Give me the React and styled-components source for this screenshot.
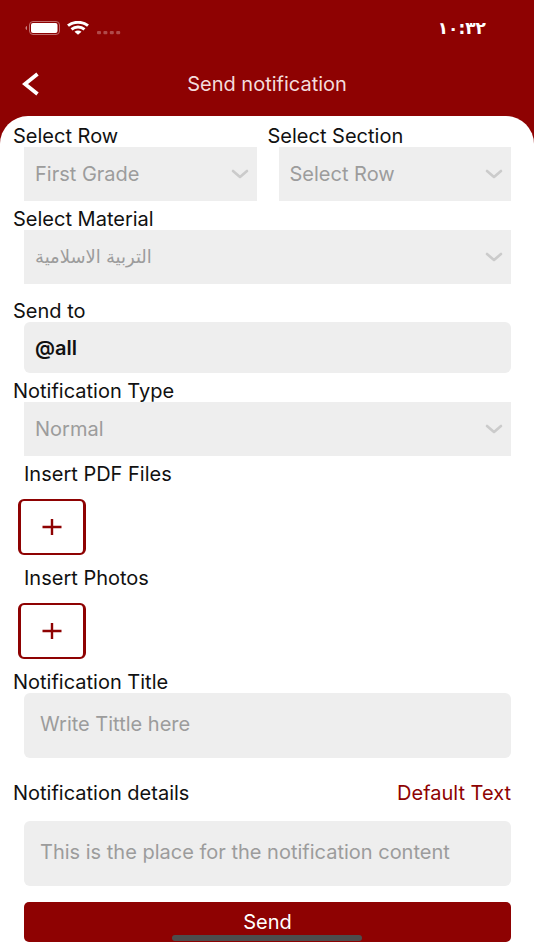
import React from 'react';
import styled, { createGlobalStyle } from 'styled-components';

const GlobalStyle = createGlobalStyle`
  * {
    box-sizing: border-box;
  }
  body {
    margin: 0;
    background-color: #ffffff;
    font-family: Inter, "DejaVu Sans", sans-serif;
    font-size: 20px;
    line-height: 22px;
    color: #111111;
  }
  button, input, select, textarea {
    font: inherit;
    margin: 0;
  }
`;

const Screen = styled.div`
  min-height: 100vh;
  background: linear-gradient(#8e0202 160px, #ffffff 160px);
`;

const StatusBar = styled.div`
  display: flex;
  align-items: center;
  justify-content: space-between;
  height: 56px;
  padding: 0 48px 0 24px;
`;

const StatusIcons = styled.div`
  display: flex;
  align-items: center;
`;

const Clock = styled.span`
  color: #ffffff;
  font-family: "DejaVu Sans", sans-serif;
  font-size: 17px;
  font-weight: bold;
`;

const Header = styled.header`
  display: grid;
  grid-template-columns: 48px 1fr 48px;
  align-items: center;
  height: 60px;
`;

const BackButton = styled.button`
  display: flex;
  align-items: center;
  justify-content: flex-end;
  height: 48px;
  padding: 0 8px 4px 0;
  border: none;
  background: none;
  cursor: pointer;
`;

const Title = styled.h1`
  margin: 0;
  padding-bottom: 4px;
  text-align: center;
  font-size: 20px;
  font-weight: 400;
  color: #f4dcdc;
`;

const Sheet = styled.form`
  padding: 9px 23px 8px 13px;
  border-radius: 28px 28px 0 0;
  background-color: #ffffff;
`;

const Columns = styled.div`
  display: grid;
  grid-template-columns: 1fr 1fr;
  gap: 11px;
`;

const Group = styled.div`
  margin-bottom: ${({ gap = '7px' }) => gap};
`;

const Label = styled.label`
  display: block;
  padding-left: ${({ $inset }) => $inset ? '11px' : '0'};
`;

const LabelRow = styled.div`
  display: flex;
  justify-content: space-between;
  margin-bottom: 17px;
`;

const DefaultText = styled.button`
  padding: 0;
  border: none;
  background: none;
  color: #8e0202;
  cursor: pointer;
`;

const SelectBox = styled.div`
  display: grid;
  align-items: center;
  margin-left: 11px;
  background-color: #eeeeee;
  > * {
    grid-area: 1 / 1;
  }
  svg {
    justify-self: end;
    margin-right: 8px;
    pointer-events: none;
  }
`;

const StyledSelect = styled.select`
  appearance: none;
  width: 100%;
  height: 54px;
  padding: 0 36px 0 11px;
  border: none;
  border-radius: 0;
  outline: none;
  background: none;
  color: #9c9c9c;
  font-size: ${({ $arabic }) => $arabic ? '18px' : '20px'};
`;

const Recipient = styled.input`
  display: block;
  width: calc(100% - 11px);
  height: 51px;
  margin-left: 11px;
  padding: 0 11px;
  border: none;
  border-radius: 6px;
  outline: none;
  background-color: #eeeeee;
  color: #111111;
  font-weight: 600;
`;

const TextBox = styled.textarea`
  display: block;
  width: calc(100% - 11px);
  height: 65px;
  margin-left: 11px;
  padding: 20px 16px;
  border: none;
  border-radius: 6px;
  outline: none;
  resize: none;
  overflow: hidden;
  background-color: #eeeeee;
  &::placeholder {
    color: #9c9c9c;
    opacity: 1;
  }
`;

const AddButton = styled.button`
  display: flex;
  align-items: center;
  justify-content: center;
  width: 68px;
  height: 56px;
  margin: 14px 0 12px 5px;
  border: solid #8e0202;
  border-width: 2px 3px;
  border-radius: 6px;
  background-color: #ffffff;
  cursor: pointer;
`;

const SendButton = styled.button`
  display: block;
  width: calc(100% - 11px);
  height: 40px;
  margin-left: 11px;
  padding: 0;
  border: none;
  border-radius: 5px;
  background-color: #8e0202;
  color: #ffffff;
  cursor: pointer;
`;

const HomeIndicator = styled.div`
  position: fixed;
  bottom: 9px;
  left: 50%;
  width: 190px;
  height: 6px;
  margin-left: -95px;
  border-radius: 3px;
  background-color: #4d4d4d;
`;

const Battery = () => (
  <svg width='37' height='16' viewBox='0 0 37 16'>
    <path d='M3 6c-2 .6-2 3.400 0 4z' fill='#c98080' />
    <rect x='5.500' y='1.500' width='30' height='13' rx='3.500' fill='none' stroke='#c06c6c' />
    <rect x='7' y='3' width='26.500' height='10' rx='2' fill='#ffffff' />
  </svg>
);

const Wifi = () => (
  <svg width='22' height='14' viewBox='0 0 22 14' style={{ marginLeft: '6px' }}>
    <g fill='none' stroke='#ffffff' strokeWidth='3'>
      <path d='M1 4.700C6.500.2 15.500.2 21 4.700' />
      <path d='M4.500 8.300c3.700-3 9.300-3 13 0' />
    </g>
    <path d='M7.500 10.700c2-1.600 5-1.600 7 0L11 13.800z' fill='#ffffff' />
  </svg>
);

const Signal = () => (
  <svg width='24' height='14' viewBox='0 0 24 14' style={{ marginLeft: '8px' }}>
    {[0, 6.400, 12.800, 19.200].map((x) => (
      <rect key={x} x={x} y='10' width='4' height='3.200' rx='1' fill='#b04a4a' />
    ))}
  </svg>
);

const Chevron = () => (
  <svg width='18' height='10' viewBox='0 0 18 10'>
    <path d='M2 2l7 6 7-6' fill='none' stroke='#cbcbcb' strokeWidth='2.600' strokeLinecap='round' strokeLinejoin='round' />
  </svg>
);

const Plus = () => (
  <svg width='20' height='16' viewBox='0 0 20 16'>
    <path d='M.5 8h19M10 0v16' fill='none' stroke='#8e0202' strokeWidth='2.400' />
  </svg>
);

const SelectField = ({ id, label, value, arabic, gap }) => (
  <Group gap={gap}>
    <Label htmlFor={id}>{label}</Label>
    <SelectBox>
      <StyledSelect id={id} $arabic={arabic}>
        <option>{value}</option>
      </StyledSelect>
      <Chevron />
    </SelectBox>
  </Group>
);

const Upload = ({ id, label }) => (
  <div>
    <Label $inset htmlFor={id}>{label}</Label>
    <AddButton id={id} type='button'>
      <Plus />
    </AddButton>
  </div>
);

const App = () => (
  <Screen>
    <GlobalStyle />
    <StatusBar>
      <StatusIcons>
        <Battery />
        <Wifi />
        <Signal />
      </StatusIcons>
      <Clock>١٠:٣٢</Clock>
    </StatusBar>
    <Header>
      <BackButton aria-label='Back'>
        <svg width='18' height='24' viewBox='0 0 18 24'>
          <path d='M15.500 2L3 12l12.500 10' fill='none' stroke='#ffffff' strokeWidth='3.800' />
        </svg>
      </BackButton>
      <Title>Send notification</Title>
    </Header>
    <Sheet onSubmit={(event) => event.preventDefault()}>
      <Columns>
        <SelectField id='row' label='Select Row' value='First Grade' />
        <SelectField id='section' label='Select Section' value='Select Row' />
      </Columns>
      <SelectField id='material' label='Select Material' value='التربية الاسلامية' arabic gap='16px' />
      <Group>
        <Label htmlFor='to'>Send to</Label>
        <Recipient id='to' defaultValue='@all' />
      </Group>
      <SelectField id='type' label='Notification Type' value='Normal' />
      <Upload id='pdf' label='Insert PDF Files' />
      <Upload id='photos' label='Insert Photos' />
      <Group gap='24px'>
        <Label htmlFor='title'>Notification Title</Label>
        <TextBox id='title' rows={1} placeholder='Write Tittle here' />
      </Group>
      <Group gap='16px'>
        <LabelRow>
          <Label htmlFor='details'>Notification details</Label>
          <DefaultText type='button'>Default Text</DefaultText>
        </LabelRow>
        <TextBox id='details' rows={1} placeholder='This is the place for the notification content' />
      </Group>
      <SendButton type='submit'>Send</SendButton>
    </Sheet>
    <HomeIndicator />
  </Screen>
);

export default App;
